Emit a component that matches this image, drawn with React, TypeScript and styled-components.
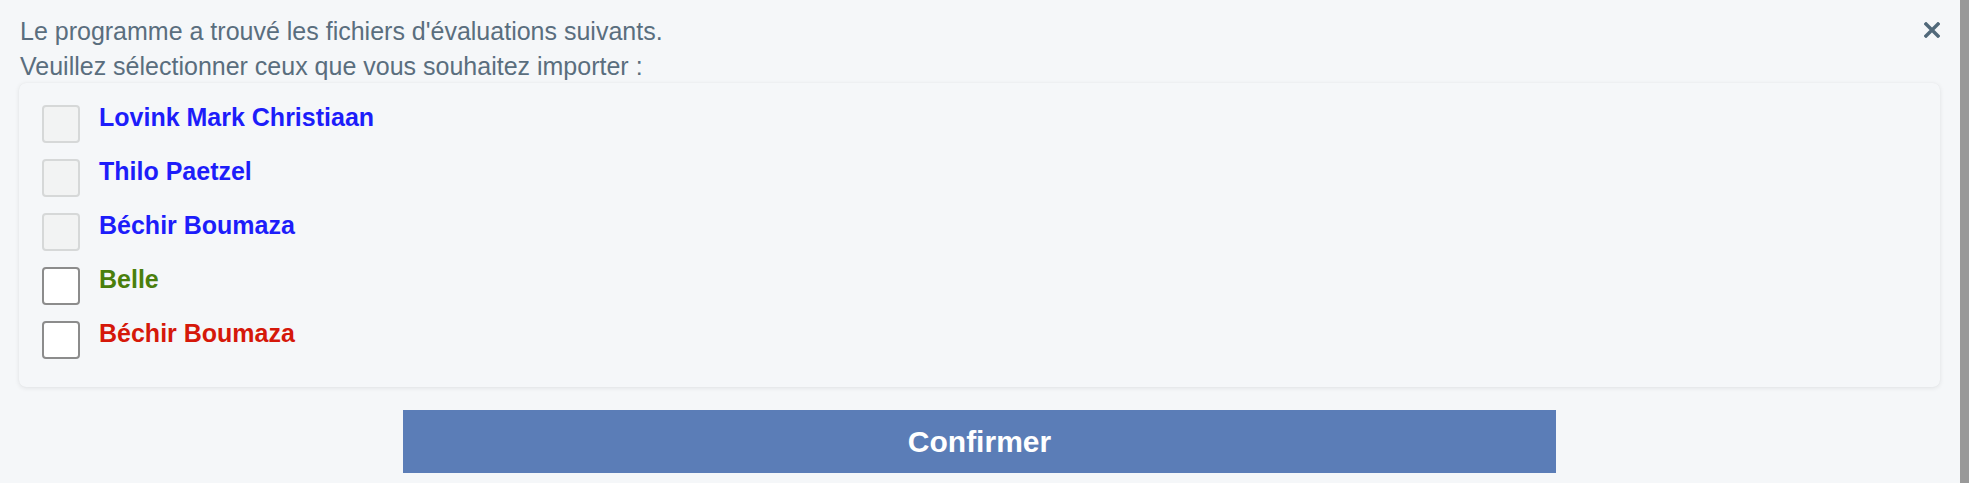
import React from "react";
import styled, { createGlobalStyle } from "styled-components";

const GlobalStyle = createGlobalStyle`
  html, body {
    margin: 0;
    padding: 0;
    height: 100%;
    overflow: hidden;
    background: #f5f7f9;
    font-family: "Liberation Sans", Arial, Helvetica, sans-serif;
  }
  * { box-sizing: border-box; }
`;

const Page = styled.div`
  display: flex;
  height: 100vh;
  width: 100vw;
  background: #f5f7f9;
`;

const Main = styled.main`
  flex: 1;
  min-width: 0;
  padding: 14px 20px 0 19px;
  display: flex;
  flex-direction: column;
`;

const ScrollTrack = styled.div`
  width: 9px;
  flex: none;
  background: #999999;
`;

const Header = styled.header`
  display: flex;
  justify-content: space-between;
  align-items: flex-start;
`;

const Intro = styled.p`
  margin: 0 0 0 1px;
  font-size: 25px;
  line-height: 35px;
  color: #5a6e7e;
`;

const CloseButton = styled.button`
  margin-top: 8px;
  width: 16px;
  height: 16px;
  padding: 0;
  border: 0;
  background: transparent;
  cursor: pointer;
  display: flex;
  color: #51697a;
`;

const Card = styled.section`
  margin-top: -1px;
  padding: 22px 23px 28px;
  background: #f5f7f9;
  border-radius: 7px;
  box-shadow: 0 1px 5px rgba(0, 0, 0, 0.09), 0 0 1px rgba(0, 0, 0, 0.06);
  display: flex;
  flex-direction: column;
  gap: 16px;
`;

const Row = styled.label`
  display: flex;
  align-items: flex-start;
  gap: 19px;
  cursor: pointer;
`;

const Box = styled.span<{ $disabled?: boolean }>`
  flex: none;
  width: 38px;
  height: 38px;
  border-radius: 4px;
  background: ${(p) => (p.$disabled ? "#f2f3f3" : "#ffffff")};
  border: 2px solid ${(p) => (p.$disabled ? "#d6d8d8" : "#8c8c8c")};
`;

const Name = styled.span<{ $color: string }>`
  margin-top: -2px;
  font-size: 25px;
  line-height: 29px;
  font-weight: 700;
  color: ${(p) => p.$color};
`;

const ConfirmButton = styled.button`
  align-self: center;
  margin-top: 23px;
  width: 60%;
  height: 63px;
  border: 0;
  border-radius: 0;
  background: #5b7db7;
  color: #ffffff;
  font-family: inherit;
  font-size: 30px;
  font-weight: 700;
  cursor: pointer;
`;

const entries = [
  { name: "Lovink Mark Christiaan", color: "#1d1dfa", disabled: true },
  { name: "Thilo Paetzel", color: "#1d1dfa", disabled: true },
  { name: "Béchir Boumaza", color: "#1d1dfa", disabled: true },
  { name: "Belle", color: "#4a7f0c", disabled: false },
  { name: "Béchir Boumaza", color: "#d5180a", disabled: false },
];

export default function App() {
  return (
    <>
      <GlobalStyle />
      <Page>
        <Main>
          <Header>
            <Intro>
              Le programme a trouvé les fichiers d'évaluations suivants.
              <br />
              Veuillez sélectionner ceux que vous souhaitez importer :
            </Intro>
            <CloseButton aria-label="Fermer">
              <svg width="16" height="16" viewBox="0 0 16 16">
                <path
                  d="M2 2 L14 14 M14 2 L2 14"
                  stroke="currentColor"
                  strokeWidth="3.4"
                  strokeLinecap="square"
                />
              </svg>
            </CloseButton>
          </Header>
          <Card>
            {entries.map((e, i) => (
              <Row key={i}>
                <Box $disabled={e.disabled} />
                <Name $color={e.color}>{e.name}</Name>
              </Row>
            ))}
          </Card>
          <ConfirmButton>Confirmer</ConfirmButton>
        </Main>
        <ScrollTrack />
      </Page>
    </>
  );
}
